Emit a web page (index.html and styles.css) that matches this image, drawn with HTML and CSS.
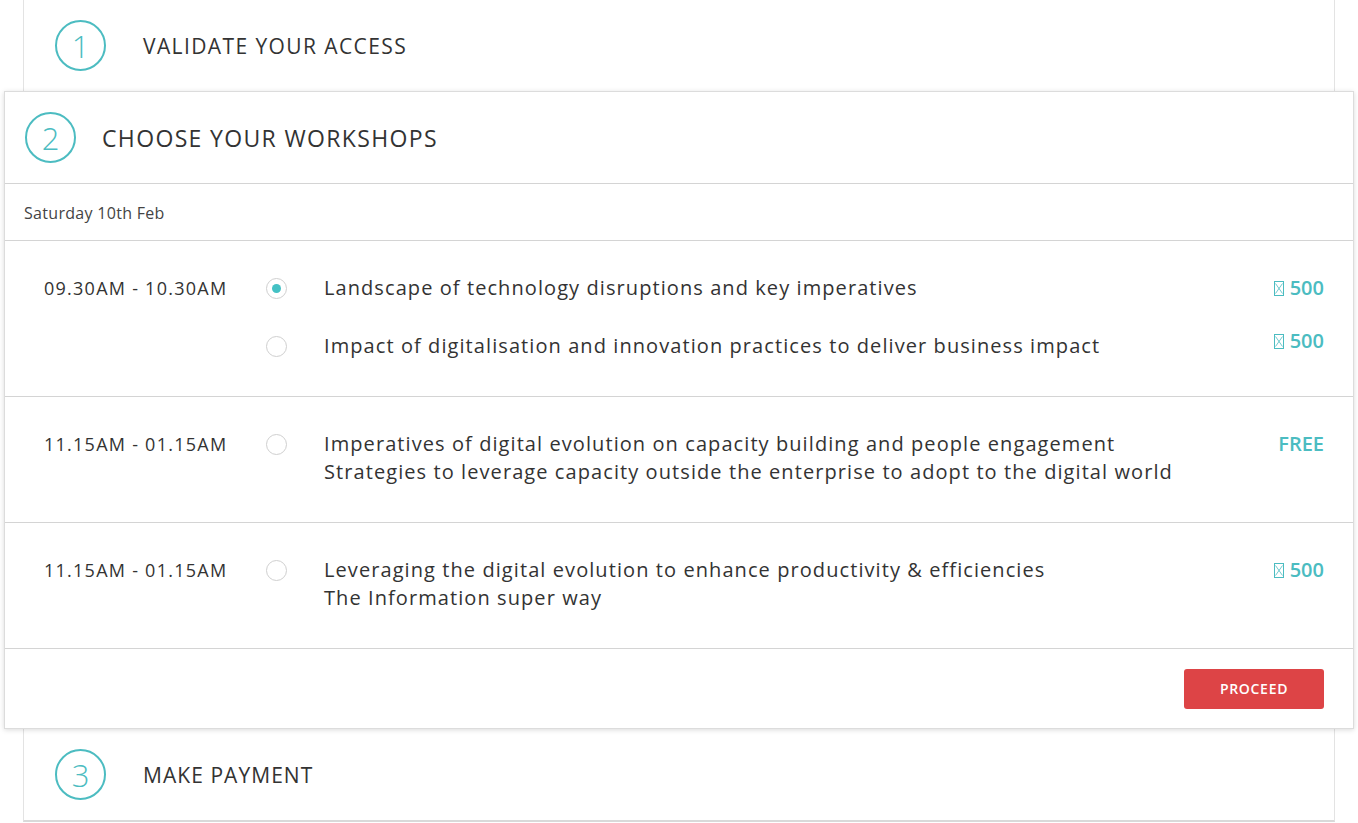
FILE: index.html
```html
<!DOCTYPE html>
<html>
<head>
<meta charset="utf-8">
<link rel="stylesheet" href="styles.css">
</head>
<body>
<div class="page">
  <section class="step step-collapsed step-first">
    <div class="step-head">
      <span class="step-num">1</span>
      <h2 class="step-title">VALIDATE YOUR ACCESS</h2>
    </div>
  </section>

  <section class="step step-open">
    <div class="open-head">
      <span class="step-num">2</span>
      <h2 class="step-title step-title-open">CHOOSE YOUR WORKSHOPS</h2>
    </div>
    <div class="date-row">Saturday 10th Feb</div>

    <div class="slot">
      <div class="slot-time">09.30AM - 10.30AM</div>
      <div class="slot-options">
        <div class="option">
          <span class="radio checked"></span>
          <div class="option-text"><div>Landscape of technology disruptions and key imperatives</div></div>
          <div class="price"><svg class="tofu" width="10" height="15" viewBox="0 0 10 15"><rect x="0.5" y="0.5" width="9" height="14" fill="none" stroke="currentColor"/><path d="M1.5 2.5 L8.5 12.5 M8.5 2.5 L1.5 12.5" stroke="currentColor" stroke-width="0.8"/></svg>500</div>
        </div>
        <div class="option">
          <span class="radio"></span>
          <div class="option-text"><div>Impact of digitalisation and innovation practices to deliver business impact</div></div>
          <div class="price price-raised"><svg class="tofu" width="10" height="15" viewBox="0 0 10 15"><rect x="0.5" y="0.5" width="9" height="14" fill="none" stroke="currentColor"/><path d="M1.5 2.5 L8.5 12.5 M8.5 2.5 L1.5 12.5" stroke="currentColor" stroke-width="0.8"/></svg>500</div>
        </div>
      </div>
    </div>

    <div class="slot">
      <div class="slot-time">11.15AM - 01.15AM</div>
      <div class="slot-options">
        <div class="option">
          <span class="radio"></span>
          <div class="option-text">
            <div>Imperatives of digital evolution on capacity building and people engagement</div>
            <div>Strategies to leverage capacity outside the enterprise to adopt to the digital world</div>
          </div>
          <div class="price">FREE</div>
        </div>
      </div>
    </div>

    <div class="slot">
      <div class="slot-time">11.15AM - 01.15AM</div>
      <div class="slot-options">
        <div class="option">
          <span class="radio"></span>
          <div class="option-text">
            <div>Leveraging the digital evolution to enhance productivity &amp; efficiencies</div>
            <div>The Information super way</div>
          </div>
          <div class="price"><svg class="tofu" width="10" height="15" viewBox="0 0 10 15"><rect x="0.5" y="0.5" width="9" height="14" fill="none" stroke="currentColor"/><path d="M1.5 2.5 L8.5 12.5 M8.5 2.5 L1.5 12.5" stroke="currentColor" stroke-width="0.8"/></svg>500</div>
        </div>
      </div>
    </div>

    <div class="actions">
      <button class="proceed">PROCEED</button>
    </div>
  </section>

  <section class="step step-collapsed step-last">
    <div class="step-head">
      <span class="step-num">3</span>
      <h2 class="step-title step-title-short">MAKE PAYMENT</h2>
    </div>
  </section>
</div>
</body>
</html>
```

FILE: styles.css
```css
* { box-sizing: border-box; }

html, body {
  margin: 0;
  padding: 0;
  background: #ffffff;
}

body {
  font-family: "Open Sans", "Noto Sans", sans-serif;
  color: #333333;
}

.page {
  display: flex;
  flex-direction: column;
}

.step-collapsed {
  margin: 0 23px;
  border-left: 1px solid #e3e3e3;
  border-right: 1px solid #e3e3e3;
  background: #fff;
}

.step-first {
  height: 91px;
}

.step-last {
  height: 93px;
  border-bottom: 2px solid #d9d9d9;
}

.step-head {
  height: 100%;
  display: flex;
  align-items: center;
  padding-left: 31px;
  gap: 37px;
}

.step-num {
  width: 51px;
  height: 51px;
  border: 2px solid #4cbcc1;
  border-radius: 50%;
  color: #4cbcc1;
  display: flex;
  align-items: center;
  justify-content: center;
  font-size: 31px;
  font-weight: 300;
  flex: none;
}

.step-title {
  margin: 0;
  font-size: 21px;
  font-weight: 400;
  letter-spacing: 1.4px;
  color: #333;
}

.step-title-open {
  font-size: 23px;
  letter-spacing: 1.35px;
}

.step-title-short {
  letter-spacing: 1.05px;
}

.step-open {
  margin: 0 4px;
  border: 1px solid #dcdcdc;
  box-shadow: 0 1px 5px rgba(0, 0, 0, 0.15);
  background: #fff;
  position: relative;
  z-index: 1;
}

.open-head {
  height: 92px;
  display: flex;
  align-items: center;
  padding-left: 20px;
  gap: 26px;
  border-bottom: 1px solid #d4d4d4;
}

.date-row {
  height: 57px;
  display: flex;
  align-items: center;
  padding-left: 19px;
  padding-top: 1px;
  font-size: 16px;
  letter-spacing: 0.3px;
  color: #444;
  border-bottom: 1px solid #d4d4d4;
}

.slot {
  display: flex;
  padding: 33px 29px 36px 39px;
  border-bottom: 1px solid #d4d4d4;
}

.slot-time {
  width: 222px;
  flex: none;
  font-size: 18px;
  line-height: 28px;
  letter-spacing: 1.25px;
  color: #333;
}

.slot-options {
  flex: 1;
  display: flex;
  flex-direction: column;
  gap: 30px;
}

.option {
  display: flex;
  align-items: flex-start;
}

.radio {
  width: 21px;
  height: 21px;
  margin-top: 4px;
  border: 1px solid #cfcfcf;
  border-radius: 50%;
  display: flex;
  align-items: center;
  justify-content: center;
  flex: none;
}

.radio.checked::after {
  content: "";
  width: 9px;
  height: 9px;
  border-radius: 50%;
  background: #44c1c4;
}

.option-text {
  flex: 1;
  margin-left: 37px;
  font-size: 20px;
  line-height: 28px;
  letter-spacing: 1.08px;
  color: #333;
}

.price {
  flex: none;
  font-size: 20px;
  line-height: 28px;
  font-weight: 600;
  color: #4bbcc1;
  display: flex;
  align-items: center;
  gap: 6px;
}

.price-raised {
  margin-top: -5px;
}

.tofu {
  display: block;
}

.actions {
  height: 79px;
  display: flex;
  align-items: center;
  justify-content: flex-end;
  padding-right: 29px;
}

.proceed {
  width: 140px;
  height: 40px;
  border: none;
  border-radius: 3px;
  background: #dd4446;
  color: #fff;
  font-family: "Open Sans", sans-serif;
  font-size: 14px;
  font-weight: 600;
  letter-spacing: 0.7px;
}
```
